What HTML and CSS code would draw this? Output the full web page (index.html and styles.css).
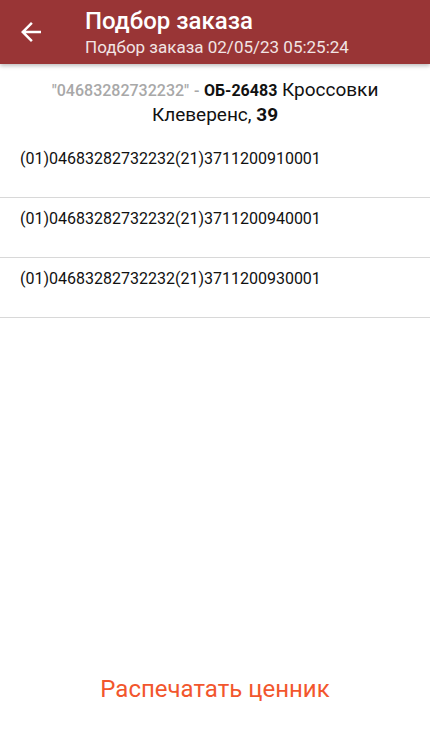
FILE: index.html
```html
<!DOCTYPE html>
<html lang="ru">
<head>
    <meta charset="UTF-8">
    <meta name="viewport" content="width=device-width, initial-scale=1.0">
    <title>Подбор заказа</title>
    <link rel="stylesheet" href="styles.css">
</head>
<body>
    <div class="screen">
        <header class="toolbar">
            <button class="back-btn" aria-label="Назад">
                <svg width="30" height="30" viewBox="0 0 24 24">
                    <path d="M20 11H7.83l5.59-5.59L12 4l-8 8 8 8 1.41-1.41L7.83 13H20v-2z" fill="#fff"/>
                </svg>
            </button>
            <div class="titles">
                <div class="title">Подбор заказа</div>
                <div class="subtitle">Подбор заказа 02/05/23 05:25:24</div>
            </div>
        </header>

        <div class="product">
            <span class="code">"04683282732232"</span> <span class="code">-</span> <b class="article">ОБ-26483</b> Кроссовки Клеверенс, <b>39</b>
        </div>

        <ul class="marks">
            <li>(01)04683282732232(21)3711200910001</li>
            <li>(01)04683282732232(21)3711200940001</li>
            <li>(01)04683282732232(21)3711200930001</li>
        </ul>

        <div class="footer">
            <button class="print-btn">Распечатать ценник</button>
        </div>
    </div>
</body>
</html>
```

FILE: styles.css
```css
body {
    margin: 0;
    font-family: Roboto, "Noto Sans", sans-serif;
    background-color: #fff;
    color: #000;
}
.screen {
    display: flex;
    flex-direction: column;
    height: 737px;
}
.toolbar {
    display: flex;
    align-items: center;
    height: 64px;
    flex-shrink: 0;
    background-color: #993536;
    color: #fff;
    box-shadow: 0 2px 4px rgba(0, 0, 0, 0.25);
}
.back-btn {
    width: 85px;
    height: 64px;
    padding: 0 0 0 16px;
    background: none;
    border: none;
    display: flex;
    align-items: center;
}
.titles {
    display: flex;
    flex-direction: column;
}
.title {
    font-size: 24px;
    font-weight: 500;
    line-height: 28px;
}
.subtitle {
    font-size: 17px;
    line-height: 22px;
    padding-top: 1px;
    color: #f1e4e4;
}
.product {
    padding: 14px 30px 0;
    text-align: center;
    font-size: 19px;
    line-height: 24px;
    color: #111;
}
.code {
    font-size: 16px;
    font-weight: 500;
    color: #a8a8a8;
}
.article {
    font-size: 16px;
}
.marks {
    list-style: none;
    margin: 11px 0 0;
    padding: 0;
}
.marks li {
    height: 60px;
    padding: 10px 20px 0;
    box-sizing: border-box;
    font-size: 16px;
    line-height: 22px;
    color: #111;
    border-bottom: 1px solid #d8d8d8;
}
.footer {
    margin-top: auto;
    display: flex;
    justify-content: center;
    padding-bottom: 34px;
}
.print-btn {
    background: none;
    border: none;
    font-family: Roboto, "Noto Sans", sans-serif;
    font-size: 24px;
    color: #f2562d;
    padding: 0;
}
```
